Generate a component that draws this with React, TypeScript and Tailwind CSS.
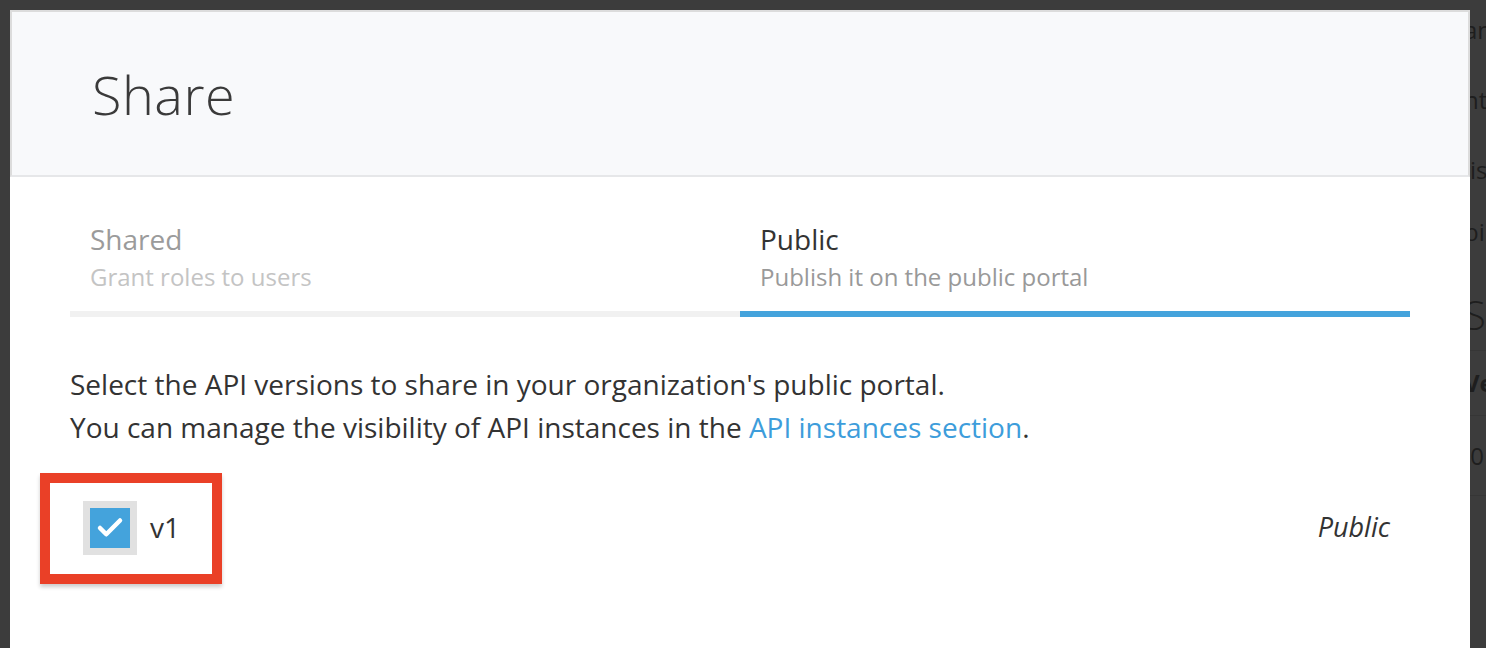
import { Check } from "lucide-react";

const font = { fontFamily: '"Open Sans", "Noto Sans", sans-serif' };

function BackgroundPage() {
  return (
    <div className="h-[648px] w-full overflow-hidden bg-[#3c3c3c] text-[#1e1e1e]">
      <div className="flex flex-col pl-[1464px] text-[24px] leading-[30px]" style={font}>
        <div className="h-[60px] flex items-center">an</div>
        <div className="h-[80px] flex items-center">nt</div>
        <div className="h-[60px] flex items-center">lis</div>
        <div className="h-[64px] flex items-center">bil</div>
        <div className="h-[86px] flex items-end pb-[15px] text-[40px] leading-[40px] font-light">
          S
        </div>
        <div className="h-px bg-[#363636]" />
        <div className="h-[64px] flex items-center font-bold">Ve</div>
        <div className="h-px bg-[#363636]" />
        <div className="h-[79px] flex items-center">.0</div>
        <div className="h-px bg-[#363636]" />
      </div>
    </div>
  );
}

function Tab({
  title,
  subtitle,
  active,
}: {
  title: string;
  subtitle: string;
  active?: boolean;
}) {
  return (
    <div className="flex-1 flex flex-col">
      <div className="px-[20px] pb-[14px]">
        <div
          className={`text-[28px] leading-[36px] ${
            active ? "text-[#333333]" : "text-[#9b9b9b]"
          }`}
        >
          {title}
        </div>
        <div
          className={`text-[24px] leading-[40px] ${
            active ? "text-[#999999]" : "text-[#c4c4c4]"
          }`}
        >
          {subtitle}
        </div>
      </div>
      <div className={`h-[6px] ${active ? "bg-[#44a3dc]" : "bg-[#f1f1f1]"}`} />
    </div>
  );
}

export default function App() {
  return (
    <div className="relative w-[1486px] h-[648px] overflow-hidden">
      <BackgroundPage />

      {/* modal */}
      <div
        className="absolute left-[10px] top-[10px] w-[1460px] h-[650px] bg-white flex flex-col"
        style={font}
      >
        <div className="h-[167px] bg-[#f8f9fb] border-l-2 border-r-2 border-t-2 border-b-2 border-[#dcdcdc] border-b-[#e6e7e9] flex items-center pl-[80px]">
          <h1 className="text-[54px] font-light text-[#3a3a3a] leading-none tracking-[0.5px]">
            Share
          </h1>
        </div>

        <div className="px-[60px] pt-[44px]">
          <div className="flex">
            <Tab title="Shared" subtitle="Grant roles to users" />
            <Tab
              title="Public"
              subtitle="Publish it on the public portal"
              active
            />
          </div>

          <div className="pt-[46px] text-[28px] leading-[43px] text-[#333333]">
            <p>
              Select the API versions to share in your organization's public
              portal.
            </p>
            <p>
              You can manage the visibility of API instances in the{" "}
              <a href="#" className="text-[#3d9ddb]">
                API instances section
              </a>
              .
            </p>
          </div>

          <div className="mt-[24px] flex items-center justify-between pr-[20px]">
            <div className="-ml-[30px] w-[182px] h-[111px] border-[10px] border-[#ea4027] shadow-[0_3px_4px_rgba(0,0,0,0.2)] flex items-center pl-[33px] gap-[13px]">
              <div className="w-[54px] h-[54px] bg-[#e1e1e1] flex items-center justify-center -mt-[2px]">
                <div className="w-[40px] h-[40px] bg-[#44a3dc] flex items-center justify-center">
                  <Check className="text-white" size={30} strokeWidth={3.6} />
                </div>
              </div>
              <span className="text-[28px] text-[#333333] -mt-[4px]">v1</span>
            </div>
            <span className="text-[27px] italic text-[#333333] -mt-[2px]">Public</span>
          </div>
        </div>
      </div>
    </div>
  );
}
